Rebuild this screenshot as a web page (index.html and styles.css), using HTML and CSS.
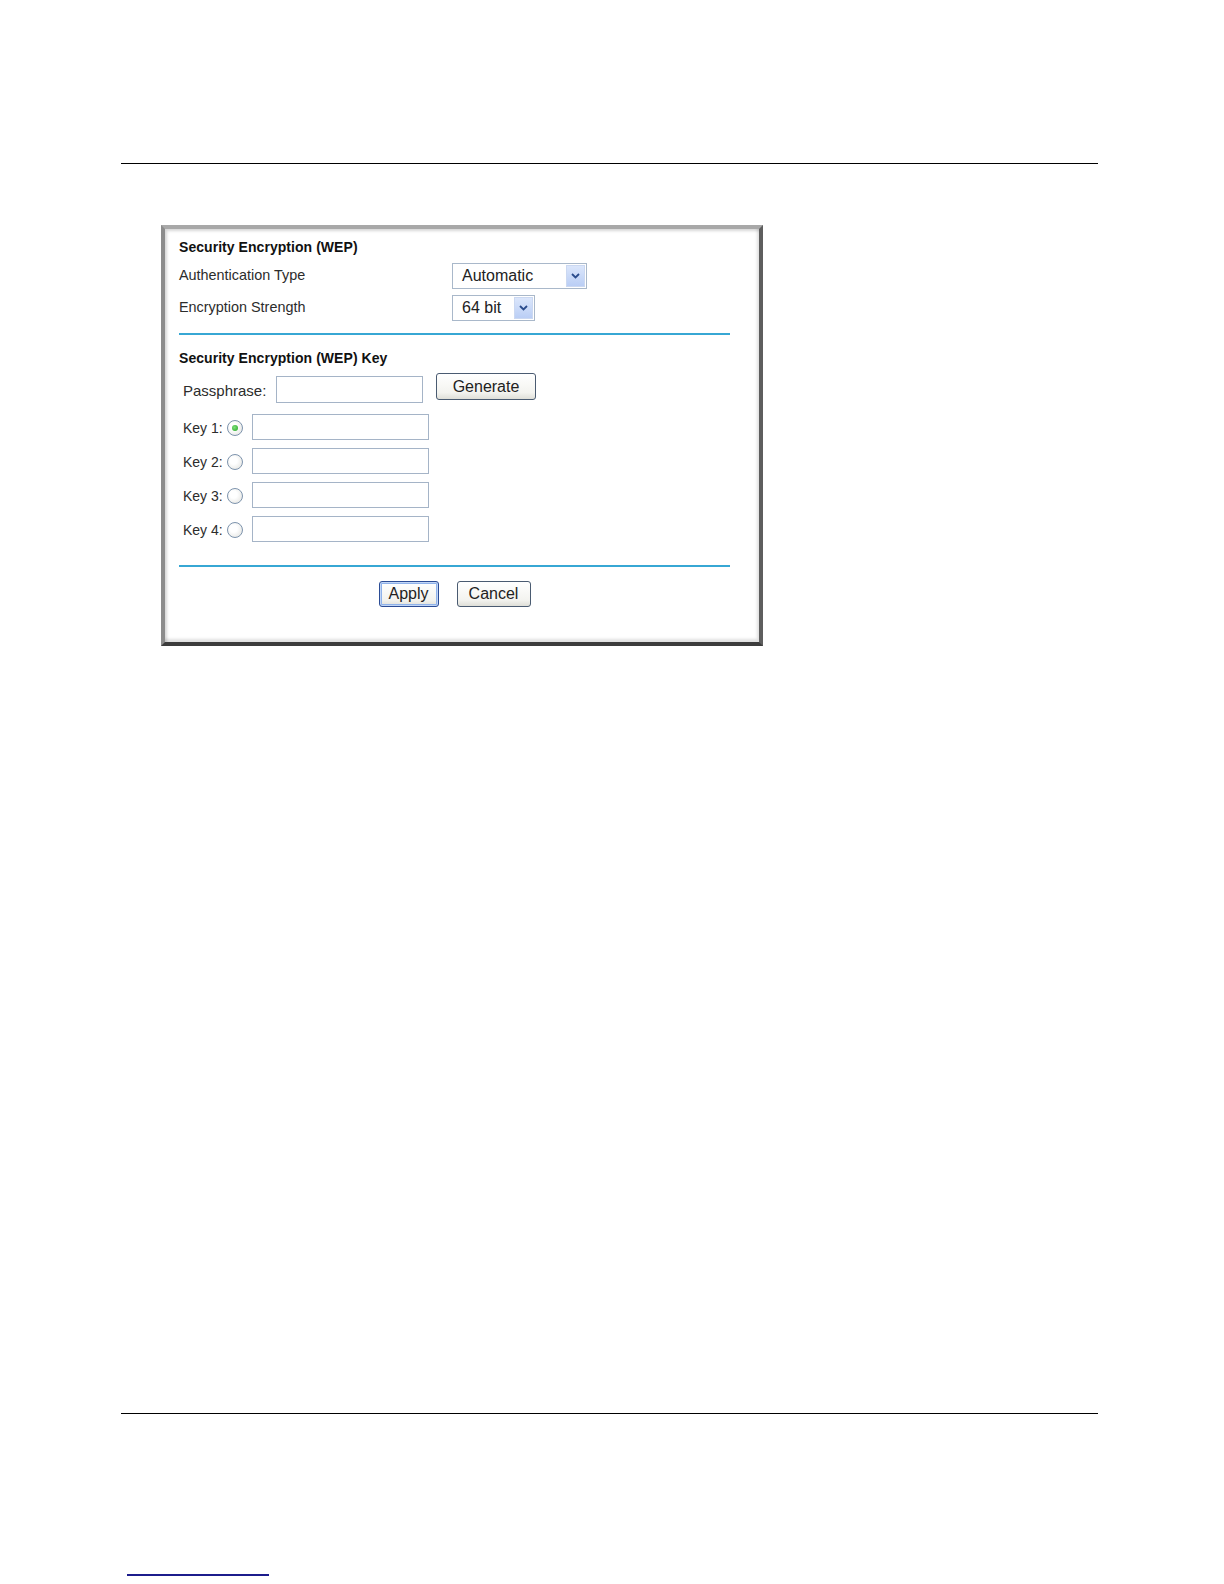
FILE: index.html
```html
<!DOCTYPE html>
<html lang="en">
<head>
<meta charset="utf-8">
<title>Security Encryption (WEP)</title>
<link rel="stylesheet" href="styles.css">
</head>
<body>
<div class="page">
  <div class="rule"></div>
  <div class="frame-wrap">
    <form class="panel">
      <div class="section-title">Security Encryption (WEP)</div>
      <div class="field-row first">
        <span class="field-label">Authentication Type</span>
        <div class="select wide">
          <span class="select-value">Automatic</span>
          <span class="select-arrow"><svg width="9" height="6" viewBox="0 0 9 6"><path d="M1 1 L4.5 4.5 L8 1" fill="none" stroke="#2b4c8c" stroke-width="1.8"/></svg></span>
        </div>
      </div>
      <div class="field-row second">
        <span class="field-label">Encryption Strength</span>
        <div class="select narrow">
          <span class="select-value">64 bit</span>
          <span class="select-arrow"><svg width="9" height="6" viewBox="0 0 9 6"><path d="M1 1 L4.5 4.5 L8 1" fill="none" stroke="#2b4c8c" stroke-width="1.8"/></svg></span>
        </div>
      </div>
      <div class="divider"></div>
      <div class="section-title lower">Security Encryption (WEP) Key</div>
      <div class="pass-row">
        <span class="pass-label">Passphrase:</span>
        <input class="textbox pass-input" type="text">
        <button type="button" class="btn generate">Generate</button>
      </div>
      <div class="keys">
        <div class="key-row"><span class="key-label">Key 1:</span><span class="radio on"></span><input class="textbox key-input" type="text"></div>
        <div class="key-row"><span class="key-label">Key 2:</span><span class="radio"></span><input class="textbox key-input" type="text"></div>
        <div class="key-row"><span class="key-label">Key 3:</span><span class="radio"></span><input class="textbox key-input" type="text"></div>
        <div class="key-row"><span class="key-label">Key 4:</span><span class="radio"></span><input class="textbox key-input" type="text"></div>
      </div>
      <div class="divider bottom"></div>
      <div class="actions">
        <button type="button" class="btn default apply">Apply</button>
        <button type="button" class="btn cancel">Cancel</button>
      </div>
    </form>
  </div>
  <div class="rule lower"></div>
  <a class="foot-link" href="#" aria-label="link"></a>
</div>
</body>
</html>
```

FILE: styles.css
```css
* { box-sizing: border-box; }

body {
  margin: 0;
  background: #fff;
  font-family: "Liberation Sans", Arial, sans-serif;
  color: #222;
}

.page {
  width: 1224px;
  padding-top: 163px;
}

.rule {
  margin: 0 126px 0 121px;
  border-top: 1px solid #000;
}

.rule.lower {
  margin-top: 767px;
}

.frame-wrap {
  padding: 61px 0 0 161px;
}

.panel {
  width: 602px;
  height: 421px;
  margin: 0;
  background: #fff;
  border-style: solid;
  border-width: 4px;
  border-color: #a8a8a8 #5e5e5e #3c3c3c #8c8c8c;
  box-shadow: inset 2px 2px 3px rgba(0, 0, 0, 0.16), inset -2px -3px 3px rgba(0, 0, 0, 0.12);
  padding: 10px 29px 0 14px;
}

.section-title {
  font-weight: bold;
  font-size: 14px;
  line-height: 16px;
  color: #111;
  letter-spacing: 0.05px;
}

.section-title.lower {
  margin-top: 15px;
}

.field-row {
  display: grid;
  grid-template-columns: 273px auto;
  align-items: center;
  height: 26px;
}

.field-row.first { margin-top: 8px; }
.field-row.second { margin-top: 6px; }

.field-label {
  font-size: 14.4px;
  line-height: 17px;
  margin-bottom: 2px;
  color: #2c2c2c;
}

.select {
  display: flex;
  height: 26px;
  border: 1px solid #a9b8ca;
  background: #fff;
}

.select.wide { width: 135px; }
.select.narrow { width: 83px; }

.select-value {
  flex: 1;
  font-size: 16px;
  line-height: 24px;
  padding-left: 9px;
  color: #222;
}

.select-arrow {
  width: 19px;
  margin: 1px;
  background: linear-gradient(#dbe6fb, #bacef5);
  border: 1px solid #cbd8f1;
  display: flex;
  align-items: center;
  justify-content: center;
}

.divider {
  height: 2px;
  background: #37a7d4;
  margin-top: 12px;
}

.divider.bottom {
  margin-top: 23px;
}

.pass-row {
  display: flex;
  align-items: flex-start;
  margin-top: 7px;
  padding-left: 4px;
}

.pass-label {
  width: 93px;
  font-size: 15px;
  line-height: 17px;
  margin-top: 9px;
  color: #2c2c2c;
}

.textbox {
  display: block;
  margin: 0;
  padding: 0;
  border: 1px solid #a5b4c7;
  background: #fff;
  font: 14px "Liberation Sans", Arial, sans-serif;
}

.pass-input {
  width: 147px;
  height: 27px;
  margin-top: 3px;
}

.keys {
  display: flex;
  flex-direction: column;
  gap: 8px;
  margin-top: 11px;
  padding-left: 4px;
}

.key-row {
  display: flex;
  align-items: center;
  height: 26px;
}

.key-label {
  width: 44px;
  font-size: 14px;
  line-height: 17px;
  margin-top: 3px;
  color: #2c2c2c;
}

.radio {
  position: relative;
  width: 16px;
  height: 16px;
  margin-right: 9px;
  margin-top: 2px;
  border-radius: 50%;
  border: 1px solid #7d93ad;
  background: radial-gradient(circle at 40% 40%, #ffffff 30%, #dedfdb 100%);
}

.radio.on::after {
  content: "";
  position: absolute;
  left: 4px;
  top: 4px;
  width: 6px;
  height: 6px;
  border-radius: 50%;
  background: radial-gradient(circle at 40% 40%, #7ee07a, #22a322);
}

.key-input {
  width: 177px;
  height: 26px;
}

.btn {
  margin: 0;
  padding: 0;
  font: 16px/1 "Liberation Sans", Arial, sans-serif;
  color: #222;
  background: linear-gradient(#ffffff, #f3f3ef 75%, #dfdfd8);
  border: 1px solid #4a5b71;
  border-radius: 3px;
}

.btn.generate {
  width: 100px;
  height: 27px;
  margin-left: 13px;
}

.actions {
  display: flex;
  justify-content: center;
  gap: 18px;
  margin-top: 14px;
}

.btn.apply {
  width: 60px;
  height: 26px;
}

.btn.cancel {
  width: 74px;
  height: 26px;
}

.btn.default {
  border-color: #2b4c95;
  box-shadow: inset 0 0 0 1px #c2d6f6, inset 0 0 0 2px #8fb2ea;
}

.foot-link {
  display: block;
  width: 142px;
  height: 0;
  margin: 160px 0 0 127px;
  border-bottom: 2px solid #1c1c8c;
}
```
